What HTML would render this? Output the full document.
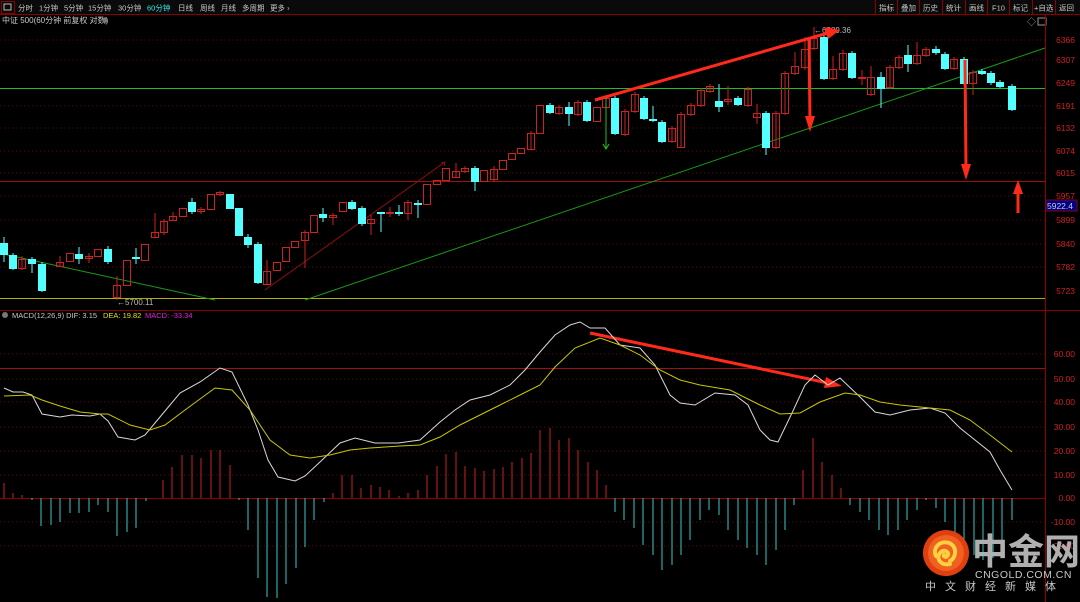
<!DOCTYPE html>
<html><head><meta charset="utf-8"><style>
html,body{margin:0;padding:0;background:#000;width:1080px;height:602px;overflow:hidden}
svg{display:block}
text{font-family:"Liberation Sans","Noto Sans CJK SC",sans-serif}
</style></head><body>
<svg width="1080" height="602" viewBox="0 0 1080 602" xmlns="http://www.w3.org/2000/svg">
<rect width="1080" height="602" fill="#000"/>
<!-- top bar -->
<rect x="0" y="0" width="1080" height="14" fill="#0a0a0a"/>
<line x1="0" y1="14.5" x2="1080" y2="14.5" stroke="#8b0000"/>
<rect x="1.5" y="1.5" width="13" height="12" fill="none" stroke="#8b0000"/>
<rect x="4" y="4" width="7" height="6" fill="none" stroke="#bbb"/>
<g font-size="7.5" fill="#c8c8c8">
<text x="18" y="10.5">分时</text><text x="39" y="10.5">1分钟</text><text x="64" y="10.5">5分钟</text><text x="88" y="10.5">15分钟</text><text x="118" y="10.5">30分钟</text>
<text x="147" y="10.5" fill="#3ee">60分钟</text><text x="178" y="10.5">日线</text><text x="200" y="10.5">周线</text><text x="221" y="10.5">月线</text><text x="242" y="10.5">多周期</text><text x="270" y="10.5">更多 ›</text>
</g>
<g stroke="#8b0000"><line x1="875.5" y1="0" x2="875.5" y2="14"/><line x1="897.5" y1="0" x2="897.5" y2="14"/><line x1="919.5" y1="0" x2="919.5" y2="14"/><line x1="942.5" y1="0" x2="942.5" y2="14"/><line x1="965.5" y1="0" x2="965.5" y2="14"/><line x1="987.5" y1="0" x2="987.5" y2="14"/><line x1="1009.5" y1="0" x2="1009.5" y2="14"/><line x1="1032.5" y1="0" x2="1032.5" y2="14"/><line x1="1055.5" y1="0" x2="1055.5" y2="14"/></g>
<g font-size="7.5" fill="#c8c8c8">
<text x="879" y="10.5">指标</text><text x="901" y="10.5">叠加</text><text x="923" y="10.5">历史</text><text x="946" y="10.5">统计</text><text x="969" y="10.5">画线</text><text x="992" y="10.5">F10</text><text x="1013" y="10.5">标记</text><text x="1034" y="10.5">+自选</text><text x="1059" y="10.5">返回</text>
</g>
<text x="2" y="23" font-size="8" fill="#c8c8c8">中证 500(60分钟 前复权 对数)</text>
<circle cx="105" cy="20" r="2.8" fill="#777"/>
<text x="1027" y="25" font-size="9" fill="#999">◇</text>
<rect x="1038" y="18" width="8" height="7" fill="none" stroke="#999"/>
<!-- axis -->
<line x1="1045.5" y1="15" x2="1045.5" y2="602" stroke="#8b0000"/>
<line x1="0" y1="310.5" x2="1080" y2="310.5" stroke="#8b0000"/>
<g stroke="#6a0000" stroke-dasharray="1,3">
<line x1="0" y1="40" x2="1045" y2="40"/><line x1="0" y1="60" x2="1045" y2="60"/><line x1="0" y1="106" x2="1045" y2="106"/><line x1="0" y1="128" x2="1045" y2="128"/><line x1="0" y1="151" x2="1045" y2="151"/><line x1="0" y1="173" x2="1045" y2="173"/><line x1="0" y1="196" x2="1045" y2="196"/><line x1="0" y1="220" x2="1045" y2="220"/><line x1="0" y1="244" x2="1045" y2="244"/><line x1="0" y1="267" x2="1045" y2="267"/>
<line x1="0" y1="354" x2="1045" y2="354"/><line x1="0" y1="379" x2="1045" y2="379"/><line x1="0" y1="402" x2="1045" y2="402"/><line x1="0" y1="427" x2="1045" y2="427"/><line x1="0" y1="451" x2="1045" y2="451"/><line x1="0" y1="475" x2="1045" y2="475"/><line x1="0" y1="522" x2="1045" y2="522"/><line x1="0" y1="546" x2="1045" y2="546"/>
</g>
<g font-size="8.5" fill="#d02020" text-anchor="end">
<text x="1075" y="43">6366</text><text x="1075" y="63">6307</text><text x="1075" y="86">6249</text><text x="1075" y="109">6191</text><text x="1075" y="131">6132</text><text x="1075" y="154">6074</text><text x="1075" y="176">6015</text><text x="1075" y="199">5957</text><text x="1075" y="223">5899</text><text x="1075" y="247">5840</text><text x="1075" y="270">5782</text><text x="1075" y="294">5723</text>
<text x="1075" y="357">60.00</text><text x="1075" y="382">50.00</text><text x="1075" y="405">40.00</text><text x="1075" y="430">30.00</text><text x="1075" y="454">20.00</text><text x="1075" y="478">10.00</text><text x="1075" y="501">0.00</text><text x="1075" y="525">-10.00</text><text x="1075" y="549">-20.00</text>
</g>
<rect x="1046" y="200" width="31" height="11" fill="#00008b" stroke="#8b0000"/>
<text x="1047" y="209" font-size="8.5" fill="#ccc">5922.4</text>
<!-- horizontal lines -->
<line x1="0" y1="88.5" x2="1045" y2="88.5" stroke="#1fbf1f"/>
<line x1="0" y1="181.5" x2="1045" y2="181.5" stroke="#a01010"/>
<line x1="0" y1="298.5" x2="1045" y2="298.5" stroke="#b0b000"/>
<line x1="0" y1="368.5" x2="1045" y2="368.5" stroke="#a01010"/>
<line x1="0" y1="498.5" x2="1045" y2="498.5" stroke="#8b0000"/>
<!-- trend lines -->
<line x1="3" y1="254" x2="215" y2="300" stroke="#1a9a1a"/>
<line x1="305" y1="300" x2="1045" y2="48" stroke="#1a9a1a"/>
<line x1="265" y1="290" x2="445" y2="162" stroke="#8b1010"/>
<!-- candles -->
<g stroke="#cc2222" stroke-width="1" fill="none">
<path d="M22 256V270M60 256V267M89 253V263M117 276V300M136 248V264M155 213V238M164 219V235M173 212V221M201 207V214M220 191V196M267 260V285M305 230V268M333 213V225M371 215V235M390 207V217M408 200V220M456 163V177M465 166V173M494 166V182M531 131V149M559 105V115M578 100V116M606 95V107M625 109V136M635 92V113M672 126V143M681 112V148M691 103V116M701 88V107M710 84V93M728 86V105M748 87V107M757 104V124M776 111V149M785 71V115M795 52V75M805 37V70M814 27V50M833 56V80M843 50V71M862 70V85M871 66V96M890 65V89M899 55V69M917 42V65M926 47V57M954 57V70M973 70V95"/>
<rect x="18.5" y="259.5" width="7" height="9"/><rect x="56.5" y="262.5" width="7" height="4"/><rect x="66.5" y="253.5" width="7" height="8"/><rect x="85.5" y="256.5" width="7" height="2"/><rect x="94.5" y="249.5" width="7" height="7"/>
<rect x="113.5" y="285.5" width="7" height="12"/><rect x="123.5" y="260.5" width="7" height="25"/><rect x="141.5" y="244.5" width="7" height="16"/><rect x="151.5" y="232.5" width="7" height="5"/><rect x="160.5" y="221.5" width="7" height="11"/><rect x="169.5" y="216.5" width="7" height="4"/><rect x="179.5" y="208.5" width="7" height="8"/><rect x="197.5" y="209.5" width="7" height="2"/><rect x="207.5" y="194.5" width="7" height="15"/><rect x="216.5" y="192.5" width="7" height="2"/>
<rect x="263.5" y="271.5" width="7" height="13"/><rect x="273.5" y="262.5" width="7" height="8"/><rect x="282.5" y="247.5" width="7" height="14"/><rect x="291.5" y="241.5" width="7" height="6"/><rect x="301.5" y="232.5" width="7" height="8"/><rect x="310.5" y="215.5" width="7" height="17"/><rect x="329.5" y="215.5" width="7" height="2"/><rect x="339.5" y="202.5" width="7" height="9"/>
<rect x="367.5" y="219.5" width="7" height="4"/><rect x="386.5" y="212.5" width="7" height="1"/><rect x="404.5" y="202.5" width="7" height="11"/><rect x="423.5" y="184.5" width="7" height="20"/><rect x="433.5" y="180.5" width="7" height="4"/><rect x="442.5" y="168.5" width="7" height="12"/><rect x="452.5" y="171.5" width="7" height="6"/><rect x="461.5" y="168.5" width="7" height="3"/><rect x="480.5" y="170.5" width="7" height="11"/><rect x="490.5" y="169.5" width="7" height="10"/><rect x="499.5" y="160.5" width="7" height="9"/><rect x="508.5" y="153.5" width="7" height="6"/><rect x="517.5" y="148.5" width="7" height="5"/><rect x="527.5" y="133.5" width="7" height="16"/><rect x="536.5" y="105.5" width="7" height="28"/>
<rect x="555.5" y="107.5" width="7" height="6"/><rect x="574.5" y="102.5" width="7" height="12"/><rect x="593.5" y="107.5" width="7" height="14"/><rect x="602.5" y="98.5" width="7" height="9"/><rect x="621.5" y="111.5" width="7" height="23"/><rect x="631.5" y="94.5" width="7" height="17"/><rect x="668.5" y="128.5" width="7" height="13"/><rect x="677.5" y="114.5" width="7" height="33"/><rect x="687.5" y="105.5" width="7" height="9"/><rect x="697.5" y="90.5" width="7" height="15"/><rect x="706.5" y="86.5" width="7" height="5"/><rect x="724.5" y="99.5" width="7" height="2"/><rect x="744.5" y="89.5" width="7" height="16"/><rect x="753.5" y="113.5" width="7" height="4"/><rect x="772.5" y="113.5" width="7" height="34"/><rect x="781.5" y="73.5" width="7" height="40"/><rect x="791.5" y="66.5" width="7" height="7"/><rect x="801.5" y="49.5" width="7" height="18"/><rect x="810.5" y="38.5" width="7" height="10"/>
<rect x="829.5" y="69.5" width="7" height="9"/><rect x="839.5" y="53.5" width="7" height="16"/><rect x="858.5" y="77.5" width="7" height="1"/><rect x="867.5" y="77.5" width="7" height="17"/><rect x="886.5" y="67.5" width="7" height="20"/><rect x="895.5" y="57.5" width="7" height="10"/><rect x="913.5" y="55.5" width="7" height="8"/><rect x="922.5" y="49.5" width="7" height="6"/><rect x="950.5" y="59.5" width="7" height="9"/><rect x="969.5" y="72.5" width="7" height="11"/>
</g>
<g fill="#54ffff" stroke="#54ffff">
<path d="M4 237V262M13 253V270M32 257V273M42 262V292M79 247V264M108 246V264M136 248V264M192 198V214M248 234V248M258 242V284M323 208V222M352 200V210M362 206V226M381 212V232M399 205V216M418 200V218M475 166V191M550 103V114M569 102V126M587 100V122M615 96V135M644 96V120M653 106V122M662 120V143M719 84V112M738 96V106M766 111V155M824 35V80M852 51V79M881 72V108M908 45V72M936 46V55M945 52V70M964 57V85M982 69V75M991 71V85M1000 80V88M1012 84V111" fill="none"/>
<rect x="0.5" y="243.5" width="7" height="11"/><rect x="9.5" y="255.5" width="7" height="13"/><rect x="28.5" y="259.5" width="7" height="4"/><rect x="38.5" y="264.5" width="7" height="26"/><rect x="75.5" y="254.5" width="7" height="4"/><rect x="104.5" y="249.5" width="7" height="12"/><rect x="132.5" y="257.5" width="7" height="1"/><rect x="188.5" y="202.5" width="7" height="9"/><rect x="226.5" y="194.5" width="7" height="14"/><rect x="235.5" y="208.5" width="7" height="27"/><rect x="244.5" y="237.5" width="7" height="7"/><rect x="254.5" y="244.5" width="7" height="38"/>
<rect x="319.5" y="214.5" width="7" height="3"/><rect x="348.5" y="202.5" width="7" height="6"/><rect x="358.5" y="208.5" width="7" height="15"/><rect x="377.5" y="212.5" width="7" height="1"/><rect x="395.5" y="212.5" width="7" height="1"/><rect x="414.5" y="203.5" width="7" height="1"/><rect x="471.5" y="168.5" width="7" height="13"/><rect x="546.5" y="105.5" width="7" height="7"/><rect x="565.5" y="107.5" width="7" height="6"/><rect x="583.5" y="102.5" width="7" height="18"/><rect x="611.5" y="98.5" width="7" height="35"/><rect x="640.5" y="98.5" width="7" height="20"/><rect x="649.5" y="119.5" width="7" height="1"/><rect x="658.5" y="122.5" width="7" height="19"/><rect x="715.5" y="101.5" width="7" height="5"/><rect x="734.5" y="98.5" width="7" height="6"/><rect x="762.5" y="113.5" width="7" height="34"/><rect x="820.5" y="37.5" width="7" height="41"/><rect x="848.5" y="53.5" width="7" height="24"/><rect x="877.5" y="77.5" width="7" height="11"/><rect x="904.5" y="55.5" width="7" height="8"/><rect x="932.5" y="49.5" width="7" height="3"/><rect x="941.5" y="54.5" width="7" height="14"/><rect x="960.5" y="59.5" width="7" height="24"/><rect x="978.5" y="71.5" width="7" height="2"/><rect x="987.5" y="73.5" width="7" height="9"/><rect x="996.5" y="82.5" width="7" height="4"/><rect x="1008.5" y="86.5" width="7" height="23"/>
</g>
<line x1="606" y1="98" x2="606" y2="148" stroke="#1fbf1f"/><path d="M603 144L606 149L609 144" fill="none" stroke="#1fbf1f"/>
<path d="M441 163L445 162L444 166" fill="none" stroke="#8b1010"/>
<text x="117" y="305" font-size="8" fill="#bbb">←5700.11</text>
<text x="814" y="33" font-size="8" fill="#bbb">←6389.36</text>
<!-- thick red arrows -->
<g stroke="#ff2a1a" stroke-width="3" fill="#ff2a1a">
<line x1="595" y1="100" x2="828" y2="33"/>
<line x1="809" y1="37" x2="810" y2="120"/>
<line x1="965" y1="60" x2="966" y2="168"/>
<line x1="1018" y1="213" x2="1018" y2="192"/>
<line x1="590" y1="333" x2="828" y2="383"/>
</g>
<g fill="#ff2a1a">
<polygon points="840,30 824,27 828,39"/>
<polygon points="810,132 805,116 815,116"/>
<polygon points="966,180 961,164 971,164"/>
<polygon points="1018,180 1013,194 1023,194"/>
<polygon points="842,386 826,377 824,388"/>
</g>
<!-- MACD header -->
<circle cx="5" cy="315" r="3" fill="#777"/>
<text x="12" y="318" font-size="7.5" fill="#c8c8c8">MACD(12,26,9)  DIF: 3.15</text>
<text x="103" y="318" font-size="7.5" fill="#e0e000">DEA: 19.82</text>
<text x="145" y="318" font-size="7.5" fill="#e020e0">MACD: -33.34</text>
<!-- histogram -->
<path stroke="#cc2222" d="M4 498V483M13 498V493M22 498V495M163 498V480M172 498V467M182 498V455M192 498V455M201 498V458M211 498V450M220 498V450M230 498V465M333 498V493M342 498V475M352 498V475M361 498V488M371 498V485M380 498V487M389 498V490M399 498V496M408 498V493M418 498V490M427 498V475M437 498V466M446 498V454M456 498V452M465 498V466M475 498V468M484 498V471M494 498V469M503 498V467M512 498V462M522 498V458M531 498V453M540 498V430M550 498V428M559 498V440M569 498V438M578 498V450M588 498V462M597 498V470M606 498V485M803 498V470M813 498V438M822 498V462M832 498V475M841 498V488"/>
<path stroke="#3cc8c8" d="M32 498V500M41 498V526M51 498V525M60 498V522M70 498V513M79 498V513M89 498V512M98 498V505M108 498V512M117 498V536M127 498V532M136 498V528M146 498V501M239 498V500M248 498V530M258 498V578M267 498V597M277 498V598M286 498V584M296 498V568M305 498V547M314 498V520M324 498V502M615 498V512M624 498V520M634 498V528M643 498V545M653 498V555M662 498V570M672 498V565M681 498V555M690 498V540M700 498V520M709 498V510M719 498V515M728 498V530M738 498V540M747 498V548M757 498V555M766 498V565M776 498V550M785 498V530M794 498V505M850 498V505M860 498V512M869 498V520M879 498V530M888 498V535M898 498V530M907 498V520M917 498V510M926 498V500M936 498V508M945 498V522M955 498V535M964 498V545M974 498V555M983 498V560M993 498V558M1002 498V545M1012 498V520"/>
<!-- DIF / DEA -->
<polyline fill="none" stroke="#d8d8d8" points="4,388 13,392 23,392 32,395 42,414 60,417 72,415 90,416 100,414 108,421 118,437 135,440 145,435 160,417 180,393 200,382 220,368 232,372 248,405 258,430 268,460 278,477 295,481 305,476 320,462 340,443 355,438 375,443 398,443 420,440 440,422 455,410 470,400 490,395 510,385 525,370 540,352 555,335 570,325 580,322 590,328 605,328 620,345 640,348 655,365 670,395 680,403 695,405 715,393 735,395 748,405 760,430 770,440 778,442 792,413 805,385 815,375 828,385 840,378 860,397 875,412 890,415 910,410 930,408 945,413 960,428 975,440 990,452 1000,470 1012,490"/>
<polyline fill="none" stroke="#c8c800" points="4,396 30,395 42,400 60,406 80,412 100,414 108,414 130,425 150,430 165,425 185,410 215,388 232,390 250,410 270,440 290,455 310,458 330,455 350,450 370,448 400,446 420,445 440,437 460,425 480,415 500,405 520,395 540,385 555,367 575,348 600,338 620,345 640,355 660,370 680,380 700,385 730,390 760,405 780,414 800,413 820,402 845,393 860,395 880,402 900,405 930,408 950,410 970,420 990,435 1012,452"/>
<!-- logo -->
<circle cx="946" cy="553" r="23" fill="#e04010"/>
<circle cx="946" cy="553" r="18" fill="#f06020"/>
<path d="M950 564c-10 2-14-6-10-11 3-4 9-2 8 2-1 3-5 2-4 0M936 556c-4-8 4-16 13-13 8 3 8 14 1 18" fill="none" stroke="#ffd040" stroke-width="4" stroke-linecap="round"/>
<text x="972" y="564" font-size="36" font-weight="bold" fill="#b0b0b0" font-family="'Noto Sans CJK SC',sans-serif">中金网</text>
<text x="975" y="578" font-size="10.5" fill="#c8c8c8" letter-spacing="0.5">CNGOLD.COM.CN</text>
<text x="925" y="590" font-size="11" fill="#c8c8c8" letter-spacing="9">中文财经新媒体</text>
</svg>
</body></html>
